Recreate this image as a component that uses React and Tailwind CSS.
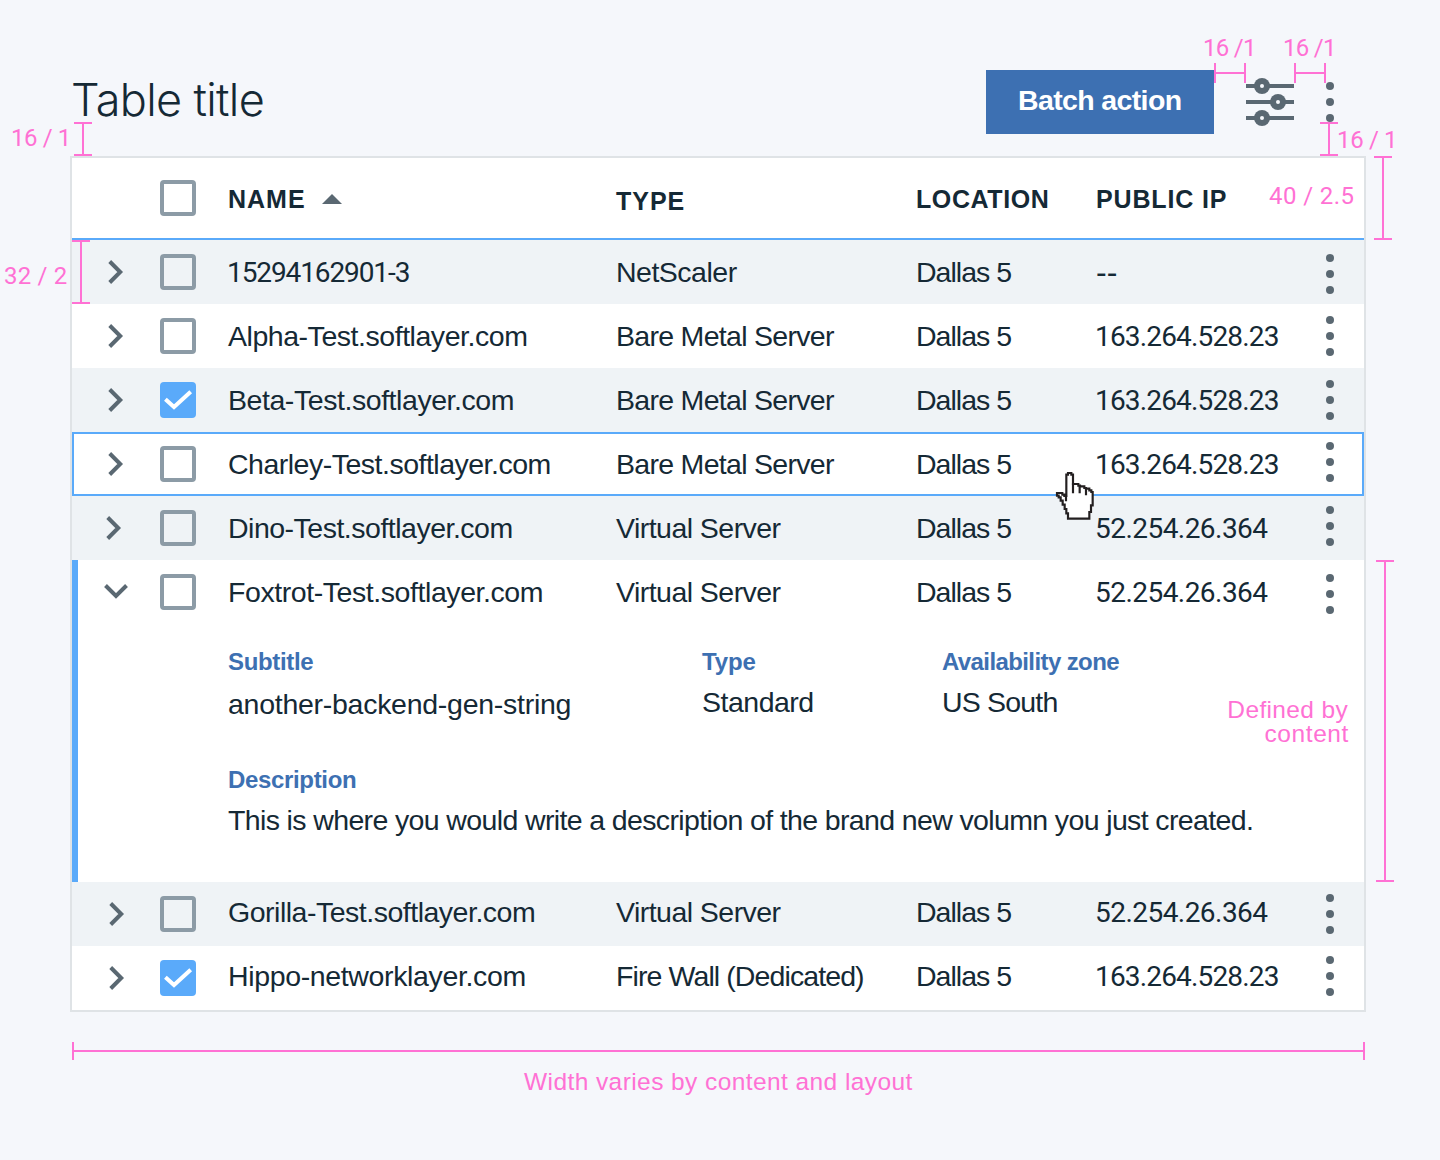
import React from "react";

const LIB = "font-['Liberation_Sans',Arial,sans-serif]";
const NUM = "font-['Roboto',sans-serif]";

function Chevron({ open, className = "" }) {
  return (
    <svg width="28" height="28" viewBox="0 0 28 28" fill="none" stroke="#5a6872" strokeWidth="4" className={className}>
      <path d={open ? "M3.5 8.5 14 19 24.5 8.5" : "M7.7 3.5 18.2 14 7.7 24.5"} />
    </svg>
  );
}

function Checkbox({ checked }) {
  if (!checked) return <span className="block size-9 rounded-[4px] border-4 border-[#8c9ba6]" />;
  return (
    <span className="block size-9 rounded-[4px] bg-[#5aaafa]">
      <svg width="36" height="36" viewBox="0 0 36 36" fill="none" stroke="#fff" strokeWidth="4">
        <path d="M5.4 17.2 14 25 30.7 9.8" />
      </svg>
    </span>
  );
}

function Dots({ className = "" }) {
  return (
    <span className={"flex w-2 flex-col gap-2 " + className}>
      <i className="size-2 rounded-full bg-[#5a6872]" />
      <i className="size-2 rounded-full bg-[#5a6872]" />
      <i className="size-2 rounded-full bg-[#5a6872]" />
    </span>
  );
}

function Sliders() {
  return (
    <svg width="48" height="48" viewBox="0 0 48 48" fill="#5a6872">
      <path d="M0 6h48v4H0zM0 22h48v4H0zM0 38h48v4H0z" />
      <circle cx="16" cy="8" r="8" />
      <circle cx="32" cy="24" r="8" />
      <circle cx="16" cy="40" r="8" />
      <g fill="#f5f7fb">
        <circle cx="16" cy="8" r="2" />
        <circle cx="32" cy="24" r="2" />
        <circle cx="16" cy="40" r="2" />
      </g>
    </svg>
  );
}

const GRID = "grid grid-cols-[88px_68px_388px_300px_180px_214px_40px] items-center";

const TYPES = {
  bare: <span className="tracking-[-0.7px]">Bare Metal Server</span>,
  virtual: <span className="tracking-[-0.54px]">Virtual Server</span>,
};
const IP_A = <span className={NUM + " -ml-px block translate-y-px text-[28px] tracking-[-0.83px]"}>163.264.528.23</span>;
const IP_B = <span className={NUM + " -ml-px block translate-y-px text-[28px] tracking-[-0.54px]"}>52.254.26.364</span>;

const ROWS = [
  {
    name: <span className={NUM + " -ml-px block translate-y-px text-[28px] tracking-[-1.1px]"}>15294162901-3</span>,
    type: <span className="tracking-[-0.5px]">NetScaler</span>,
    ip: <span className="block text-[32px]">--</span>,
    bg: "h-16 bg-[#eff3f6]", dots: "translate-y-0.5",
  },
  { name: <span className="tracking-[-0.46px]">Alpha-Test.softlayer.com</span>, type: TYPES.bare, ip: IP_A, bg: "h-16" },
  { name: <span className="tracking-[-0.44px]">Beta-Test.softlayer.com</span>, type: TYPES.bare, ip: IP_A, bg: "h-16 bg-[#eff3f6]", checked: true },
  { name: <span className="tracking-[-0.5px]">Charley-Test.softlayer.com</span>, type: TYPES.bare, ip: IP_A, bg: "h-16 ring-2 ring-inset ring-[#5aaafa]", dots: "-translate-y-0.5" },
  { name: <span className="tracking-[-0.5px]">Dino-Test.softlayer.com</span>, type: TYPES.virtual, ip: IP_B, bg: "h-16 bg-[#eff3f6]", dots: "-translate-y-0.5", chev: "-translate-x-0.5" },
  { name: <span className="tracking-[-0.43px]">Foxtrot-Test.softlayer.com</span>, type: TYPES.virtual, ip: IP_B, bg: "h-16", dots: "translate-y-0.5", chev: "-translate-y-px", open: true },
  { name: <span className="tracking-[-0.49px]">Gorilla-Test.softlayer.com</span>, type: TYPES.virtual, ip: IP_B, bg: "h-16 bg-[#eff3f6]", chev: "translate-x-px", text: "-translate-y-0.5" },
  { name: <span className="tracking-[-0.36px]">Hippo-networklayer.com</span>, type: <span className="tracking-[-0.9px]">Fire Wall (Dedicated)</span>, ip: IP_A, bg: "h-16", checked: true, dots: "-translate-y-0.5", chev: "translate-x-px", text: "-translate-y-0.5" },
];

function Row({ name, type, ip, bg, dots, chev = "", text = "", checked, open }) {
  return (
    <div className={GRID + " whitespace-nowrap text-[28.5px] leading-16 " + bg}>
      <div className="pl-[30px]"><Chevron open={open} className={chev} /></div>
      <Checkbox checked={checked} />
      <div className={text}>{name}</div>
      <div className={text}>{type}</div>
      <div className={text + " tracking-[-0.97px]"}>Dallas 5</div>
      <div className={text}>{ip}</div>
      <Dots className={"justify-self-center " + (dots || "")} />
    </div>
  );
}

function Field({ label, labelClass, children }) {
  return (
    <div className="flex flex-col whitespace-nowrap">
      <div className={"text-[24px] leading-7 font-bold text-[#3d70b2] " + labelClass}>{label}</div>
      {children}
    </div>
  );
}

function Details() {
  return (
    <div className="h-[258px] pt-6 pl-[156px]">
      <div className="flex h-[118px]">
        <div className="w-[474px]">
          <Field label="Subtitle" labelClass="tracking-[-0.35px]">
            <div className="mt-3 text-[28.5px] leading-8 tracking-[-0.27px]">another-backend-gen-string</div>
          </Field>
        </div>
        <div className="w-[240px]">
          <Field label="Type" labelClass="tracking-[-0.1px]">
            <div className="mt-2.5 text-[28.5px] leading-8 tracking-[-0.5px]">Standard</div>
          </Field>
        </div>
        <Field label="Availability zone" labelClass="tracking-[-0.6px]">
          <div className="mt-2.5 text-[28.5px] leading-8 tracking-[-0.82px]">US South</div>
        </Field>
      </div>
      <Field label="Description" labelClass="tracking-[-0.34px]">
        <div className="mt-2.5 text-[28.5px] leading-8 tracking-[-0.63px]">
          This is where you would write a description of the brand new volumn you just created.
        </div>
      </Field>
    </div>
  );
}

/* Vertical / horizontal measuring bars */
function VBar({ className }) {
  return (
    <div className={"absolute flex w-[18px] justify-center border-y-2 border-[#ff71d4] " + className}>
      <i className="w-0.5 bg-[#ff71d4]" />
    </div>
  );
}
function HBar({ className }) {
  return (
    <div className={"absolute flex items-center border-x-2 border-[#ff71d4] " + className}>
      <i className="h-0.5 w-full bg-[#ff71d4]" />
    </div>
  );
}
function Note({ className, children }) {
  return <div className={"absolute leading-6 whitespace-nowrap text-[#ff71d4] " + className}>{children}</div>;
}
const NOTE_NUM = NUM + " text-[24px] ";

function Annotations() {
  return (
    <>
      <Note className={NOTE_NUM + "left-[1203px] top-[36px] tracking-[-0.7px]"}>16 /1</Note>
      <Note className={NOTE_NUM + "left-[1283px] top-[36px] tracking-[-0.7px]"}>16 /1</Note>
      <Note className={NOTE_NUM + "left-[1337px] top-[128px] tracking-[-0.35px]"}>16 / 1</Note>
      <Note className={NOTE_NUM + "left-[11px] top-[126px] tracking-[-0.4px]"}>16 / 1</Note>
      <Note className={NOTE_NUM + "left-[1269px] top-[184px] tracking-[0.4px]"}>40 / 2.5</Note>
      <Note className={NOTE_NUM + "left-[4px] top-[264px] tracking-[0.2px]"}>32 / 2</Note>
      <Note className="left-[1225px] top-[698px] flex w-[124px] flex-col items-end text-[24.5px]">
        <span className="mr-px tracking-[0.35px]">Defined by</span>
        <span className="tracking-[0.6px]">content</span>
      </Note>
      <Note className="left-[524px] top-[1070px] text-[24.5px] tracking-[0.42px]">Width varies by content and layout</Note>
      <HBar className="left-[1214px] top-[63px] h-5 w-8" />
      <HBar className="left-[1294px] top-[63px] h-5 w-8" />
      <HBar className="left-[72px] top-[1042px] h-[18px] w-[1293px]" />
      <VBar className="left-[74px] top-[122px] h-[34px]" />
      <VBar className="left-[1320px] top-[122px] h-[34px]" />
      <VBar className="left-[1374px] top-[156px] h-[84px]" />
      <VBar className="left-[72px] top-[240px] h-16" />
      <VBar className="left-[1376px] top-[560px] h-[322px]" />
    </>
  );
}

function HandCursor() {
  return (
    <svg className="absolute top-[460px] left-[1040px]" width="70" height="70" viewBox="0 0 210 210" stroke="#231f20" strokeWidth="6.5" strokeLinejoin="miter">
      <path
        fill="#fff"
        d="M84 39H94V44H99V72H115V77H120V79H133V84H138V86H148V91H154V96H158V136H153V156H148V176H84V160H79V147H74V134H68V122H62V112H56V107H51V99H67V104H73V108H79V44H84Z"
      />
      <path fill="none" d="M78 104V124M99 70V100M119 77V100M138 84V106" />
    </svg>
  );
}

export default function App() {
  return (
    <div className={LIB + " relative h-[1160px] w-[1440px] overflow-hidden bg-[#f5f7fb] text-[#152935]"}>
      <div className="flex h-[156px] items-start pt-[70px] pr-[106px] pl-[71px]">
        <h1 className="font-['Inter',sans-serif] text-[45px] leading-[60px] font-light tracking-[-0.65px] whitespace-nowrap">Table title</h1>
        <button className="ml-auto h-16 w-[228px] bg-[#3d70b2] pb-[3px] pl-[32px] text-left text-[28.5px] font-bold tracking-[-0.63px] whitespace-nowrap text-white">
          Batch action
        </button>
        <div className="mt-2 ml-8"><Sliders /></div>
        <Dots className="mt-3 ml-8" />
      </div>

      <div className="mx-[70px] w-[1296px] border-2 border-[#dfe3e6] bg-white">
        <div className={GRID + " h-[82px] border-b-2 border-[#5aaafa] text-[25px] leading-8 font-bold whitespace-nowrap"}>
          <div />
          <Checkbox />
          <div className="flex items-center gap-4 pt-[2px] tracking-[1px]">
            NAME
            <svg width="20" height="10" viewBox="0 0 20 10" fill="#5a6872"><path d="M10 0 20 10H0z" /></svg>
          </div>
          <div className="pt-[6px] tracking-[1px]">TYPE</div>
          <div className="pt-[2px] tracking-[0.6px]">LOCATION</div>
          <div className="pt-[2px] tracking-[0.85px]">PUBLIC IP</div>
        </div>
        {ROWS.map((row, i) =>
          row.open ? (
            <div key={i} className="h-[322px] shadow-[inset_6px_0_0_#5aaafa]">
              <Row {...row} />
              <Details />
            </div>
          ) : (
            <Row key={i} {...row} />
          )
        )}
      </div>

      <Annotations />
      <HandCursor />
    </div>
  );
}
